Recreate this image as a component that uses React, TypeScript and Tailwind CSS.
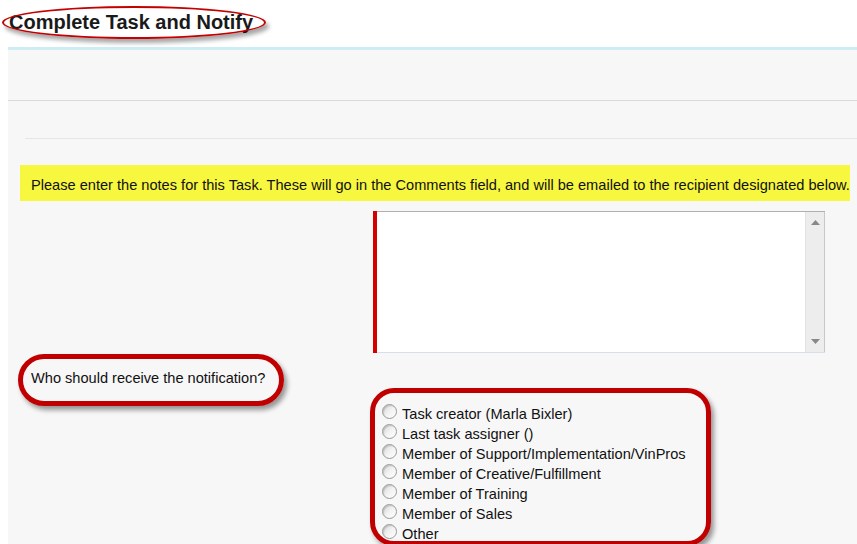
import React from 'react';

const options = [
  'Task creator (Marla Bixler)',
  'Last task assigner ()',
  'Member of Support/Implementation/VinPros',
  'Member of Creative/Fulfillment',
  'Member of Training',
  'Member of Sales',
  'Other',
];

const Radio: React.FC = () => (
  <span className="inline-block w-[15px] h-[15px] rounded-full border border-[#9a9a9a] bg-gradient-to-br from-[#d4d4d4] via-[#f2f2f2] to-white shadow-[inset_1px_1px_1px_rgba(0,0,0,0.15)] shrink-0" />
);

export default function App() {
  return (
    <div className="relative w-[857px] h-[544px] overflow-hidden bg-white text-[#111] font-['Liberation_Sans',Arial,sans-serif]">
      {/* title */}
      <div className="h-[47px] pl-[9px] pt-[9px]">
        <h1 className="text-[20px] leading-[26px] font-bold text-[#1a1a1a]">Complete Task and Notify</h1>
      </div>

      {/* panel */}
      <div className="ml-[8px] h-[497px] border-t-[3px] border-[#cfebf4] bg-[#f7f7f7]">
        <div className="h-[51px] border-b border-[#dadada]" />
        <div className="h-[38px] ml-[17px] border-b border-[#e6e6e6]" />

        <div className="ml-[12px] mr-[7px] mt-[26px] h-[36px] bg-[#f7f73f] flex items-center pt-[5px] pl-[11px] text-[14.6px] whitespace-nowrap">
          Please enter the notes for this Task. These will go in the Comments field, and will be emailed to the recipient designated below.
        </div>

        <div className="ml-[365px] mt-[10px] flex w-[452px] h-[142px]">
          <div className="w-[4px] bg-[#d40000]" />
          <div className="flex-1 flex bg-white border-t border-[#b0b0b0] border-b border-b-[#d8dde8]">
            <div className="flex-1" />
            <div className="w-[20px] bg-[#ededed] border-l border-[#e2e2e2] border-r border-r-[#c8c8c8] flex flex-col items-center justify-between py-[8px]">
              <svg width="9" height="5" viewBox="0 0 9 5"><path d="M0 5 L4.5 0 L9 5 Z" fill="#888" /></svg>
              <svg width="9" height="5" viewBox="0 0 9 5"><path d="M0 0 L4.5 5 L9 0 Z" fill="#888" /></svg>
            </div>
          </div>
        </div>

        <div className="ml-[23px] mt-[17px] text-[14.6px] leading-[16px]">Who should receive the notification?</div>

        <div className="ml-[374px] mt-[18px] flex flex-col text-[14.6px] leading-[20px]">
          {options.map((o) => (
            <label key={o} className="flex items-center gap-[5px] h-[20px]">
              <span className="-mt-[5px] flex"><Radio /></span>
              <span>{o}</span>
            </label>
          ))}
        </div>
      </div>

      {/* annotations */}
      <div className="absolute left-[2px] top-[6px] w-[264px] h-[33px] rounded-[50%] border-2 border-[#c40000] shadow-[3px_4px_4px_rgba(0,0,0,0.35)]" />
      <div className="absolute left-[18px] top-[354px] w-[266px] h-[52px] rounded-[26px] border-[5px] border-[#c00000] shadow-[3px_4px_5px_rgba(0,0,0,0.4)]" />
      <div className="absolute left-[370px] top-[388px] w-[341px] h-[158px] rounded-[24px] border-[5px] border-[#c00000] shadow-[3px_4px_5px_rgba(0,0,0,0.4)]" />
    </div>
  );
}
